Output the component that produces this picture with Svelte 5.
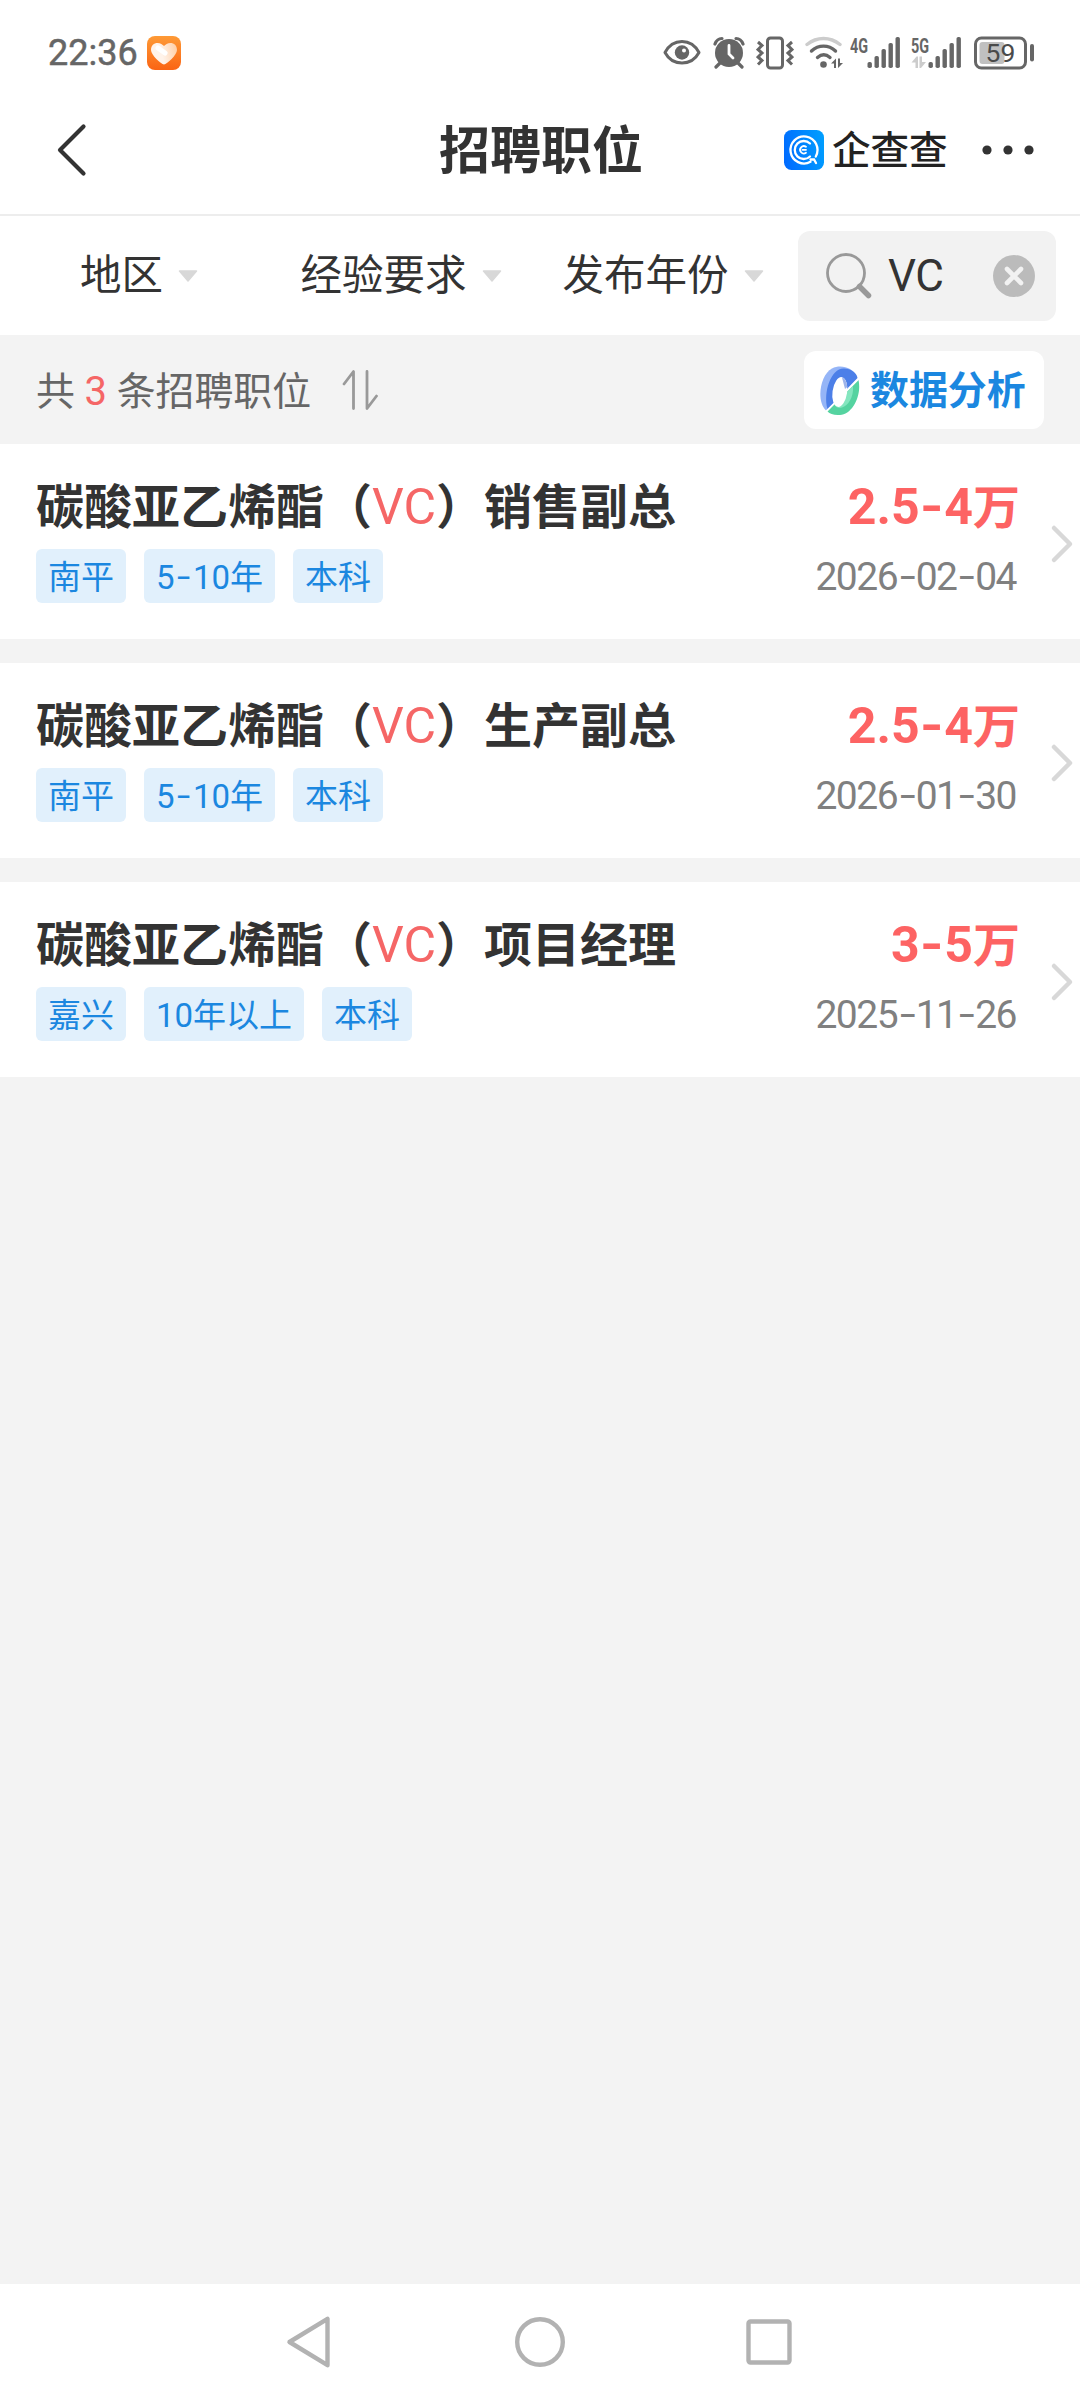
<script lang="ts">
	interface Job {
		id: number;
		name: string;
		keyword: string;
		role: string;
		tags: string[];
		salary: string;
		date: string;
	}

	const filters = ['地区', '经验要求', '发布年份'];
	const bars = [6, 12, 19, 25, 31];

	const jobs: Job[] = [
		{ id: 1, name: '碳酸亚乙烯酯', keyword: 'VC', role: '销售副总', tags: ['南平', '5-10年', '本科'], salary: '2.5-4', date: '2026-02-04' },
		{ id: 2, name: '碳酸亚乙烯酯', keyword: 'VC', role: '生产副总', tags: ['南平', '5-10年', '本科'], salary: '2.5-4', date: '2026-01-30' },
		{ id: 3, name: '碳酸亚乙烯酯', keyword: 'VC', role: '项目经理', tags: ['嘉兴', '10年以上', '本科'], salary: '3-5', date: '2025-11-26' }
	];

	let keyword = $state('VC');
</script>

{#snippet signal(label: string, data: boolean)}
	<div class="signal">
		<span class="network">{label}</span>
		<svg width="52" height="34" viewBox="0 0 52 34">
			{#each bars as h, i}
				<rect x={17.5 + i * 7} y={32 - h} width="4.4" height={h} rx="1.8" fill="#666" />
			{/each}
			{#if data}
				<path d="M0.500 26.500l5-6h1.500v11.500h-2.500v-5.500zM8.500 32V20.500H11V26h4l-5 6z" fill="#ccc" />
			{/if}
		</svg>
	</div>
{/snippet}

<!-- dash drawn wide and raised to sit level with the digits -->
{#snippet figures(text: string)}
	{#each text.split('-') as part, i}{#if i > 0}<span class="dash">-</span>{/if}{part}{/each}
{/snippet}

<div class="screen">
	<div class="status">
		<span class="time">22:36</span>
		<svg class="heart" width="34" height="34" viewBox="0 0 34 34">
			<defs>
				<linearGradient id="orange" x1="0" y1="0" x2="0" y2="1">
					<stop offset="0" stop-color="#fe9a36" />
					<stop offset="1" stop-color="#fa6414" />
				</linearGradient>
				<linearGradient id="cream" x1="0" y1="0.5" x2="1" y2="0.3">
					<stop offset="0.4" stop-color="#fff3ea" />
					<stop offset="1" stop-color="#ffd0a8" />
				</linearGradient>
			</defs>
			<rect width="34" height="34" rx="8" fill="url(#orange)" />
			<path d="M17 28.500C14 28 4 19 4 14c0-4.500 3-7 6.500-7 3 0 5 1.500 6.500 3 1.500-1.500 3.500-3 6.500-3 3.500 0 6.500 2.500 6.500 7 0 5-10 14-13 14.500z" fill="url(#cream)" />
			<path d="M11 12l7 5" stroke="#fff" stroke-width="5" stroke-linecap="round" />
		</svg>

		<div class="status-icons">
			<svg width="38" height="34" viewBox="0 0 38 34">
				<path d="M2 16.500C6 9 12 5.500 19 5.500s13 3.500 17 11c-4 7.500-10 10.500-17 10.500S6 24 2 16.500z" fill="none" stroke="#666" stroke-width="3" stroke-linejoin="round" />
				<circle cx="19" cy="16.500" r="7.200" fill="#666" />
				<circle cx="21" cy="14.500" r="2" fill="#fff" />
			</svg>
			<svg class="alarm" width="32" height="34" viewBox="0 0 32 34">
				<circle cx="16" cy="17" r="14" fill="#666" />
				<path d="M2 8c1.500-4 4-5.500 7-5.500M30 8c-1.500-4-4-5.500-7-5.500M7 27l-4 4M25 27l4 4" fill="none" stroke="#666" stroke-width="3.200" stroke-linecap="round" />
				<path d="M16 9.500v8.500l4 4" fill="none" stroke="#fff" stroke-width="2.800" stroke-linecap="round" />
			</svg>
			<svg class="vibrate" width="38" height="34" viewBox="0 0 38 34">
				<rect x="11.500" y="2" width="15" height="30" rx="3" fill="none" stroke="#666" stroke-width="3" />
				<path d="M2 6l4 3.500-4 4 4 3.500-4 4 4 3.500-4 4M36 6l-4 3.500 4 4-4 3.500 4 4-4 3.500 4 4" fill="none" stroke="#666" stroke-width="3" />
			</svg>
			<svg class="wifi" width="38" height="34" viewBox="0 0 38 34">
				<g fill="none" stroke-width="3.400" stroke-linecap="round">
					<path d="M2 8.500c10-8 23-8 33 0" stroke="#ccc" />
					<path d="M6.500 15c7-6.500 17-6.500 24 0M12.500 21.500c4-3.500 8.500-3.500 12.500 0" stroke="#666" />
				</g>
				<circle cx="18.500" cy="28.500" r="3.300" fill="#666" />
				<path d="M26 27.500l5-5v9.500h-2v-4.500zM33 32v-9.500h2v4.500h3z" fill="#666" />
			</svg>
			{@render signal('4G', false)}
			{@render signal('5G', true)}
			<svg class="battery" width="61" height="34" viewBox="0 0 61 34">
				<rect x="1.500" y="2" width="50" height="30" rx="6" fill="none" stroke="#666" stroke-width="3" />
				<rect x="5.500" y="6" width="25" height="22" rx="3" fill="#c0c0c0" />
				<rect x="56" y="8" width="4" height="17.500" rx="2" fill="#666" />
				<text x="26.500" y="26" font-size="26.500" text-anchor="middle" fill="#4a4a4a">59</text>
			</svg>
		</div>
	</div>

	<header class="header">
		<button class="back" aria-label="返回">
			<svg width="32" height="56" viewBox="0 0 32 56">
				<path d="M27.500 4.500L4 28l23.500 23.500" fill="none" stroke="#333" stroke-width="4.200" stroke-linecap="round" stroke-linejoin="round" />
			</svg>
		</button>
		<h1>招聘职位</h1>
		<div class="brand">
			<svg width="40" height="40" viewBox="0 0 40 40">
				<defs>
					<linearGradient id="blue" x1="0" y1="0.6" x2="1" y2="0.4">
						<stop offset="0" stop-color="#006cff" />
						<stop offset="1" stop-color="#009dff" />
					</linearGradient>
				</defs>
				<rect width="40" height="40" rx="7.500" fill="url(#blue)" />
				<g fill="none" stroke="#fff" stroke-linecap="round">
					<path d="M31.800 26.500A13.500 13.500 0 1 0 26.500 31.800M26.500 29.500h3.500l2 3.500" stroke-width="2.300" />
					<path d="M26 13.500A9 9 0 1 0 26 26.500" stroke-width="2.300" />
					<path d="M22 16.800A3.700 3.700 0 1 0 22 22.800M18.500 19.800h3.500" stroke-width="1.800" />
				</g>
			</svg>
			<span>企查查</span>
		</div>
		<button class="more" aria-label="更多">
			<svg width="52" height="12" viewBox="0 0 52 12">
				<circle cx="5" cy="6" r="4.600" fill="#333" />
				<circle cx="26" cy="6" r="4.600" fill="#333" />
				<circle cx="47" cy="6" r="4.600" fill="#333" />
			</svg>
		</button>
	</header>

	<div class="filters">
		{#each filters as filter}
			<button class="filter">
				{filter}
				<svg width="20" height="12" viewBox="0 0 20 12">
					<path d="M1.500 1h17L10 11z" fill="#d8d8d8" stroke="#d8d8d8" stroke-width="1.500" stroke-linejoin="round" />
				</svg>
			</button>
		{/each}
		<div class="search">
			<svg width="48" height="48" viewBox="0 0 48 48">
				<circle cx="21" cy="21" r="18.500" fill="none" stroke="#999" stroke-width="2.800" />
				<path d="M34.500 34.500l9 9" stroke="#999" stroke-width="5.500" stroke-linecap="round" />
			</svg>
			<span class="query">{keyword}</span>
			<button class="clear" aria-label="清除" onclick={() => (keyword = '')}>
				<svg width="42" height="42" viewBox="0 0 42 42">
					<circle cx="21" cy="21" r="21" fill="#bbb" />
					<path d="M14 14l14 14M28 14L14 28" stroke="#f2f2f2" stroke-width="4.600" stroke-linecap="round" />
				</svg>
			</button>
		</div>
	</div>

	<div class="summary">
		<span class="count">共 <em>{jobs.length}</em> 条招聘职位</span>
		<svg class="sort" width="36" height="42" viewBox="0 0 36 42">
			<path d="M2 15L11.500 2.500v37M25 2.500v37L34.500 27" fill="none" stroke="#999" stroke-width="2.800" stroke-linecap="round" stroke-linejoin="round" />
		</svg>
		<button class="analysis">
			<svg width="40" height="50" viewBox="0 0 40 50">
				<path d="M6 44.500C-4 35 0 9 12 2.500 21-2 33 2 36.500 10L14 36z" fill="#95b5f7" />
				<path d="M7.500 43C3 26 11 2 24 2.500c7 0 13 5 13.500 9.500L14 36.500z" fill="#4c7fe8" />
				<path d="M38.500 14C42 30 32 48.500 20 49 14 49.500 10 48 7.500 45.500z" fill="#55d3a0" />
				<path d="M33 20c1 11-5 20-11 21.500-3 1-5.500 0-7.500-2.500z" fill="#84e6bf" />
				<ellipse cx="19.800" cy="26" rx="7.300" ry="15" transform="rotate(8 19.800 26)" fill="#fff" />
				<path d="M22 11.500c3 .5 5 5 5.200 9.500l-2.200 2z" fill="#9eb4ea" />
				<path d="M6 45.500L39 12.500" stroke="#fff" stroke-width="1.500" />
			</svg>
			数据分析
		</button>
	</div>

	<main class="jobs">
		{#each jobs as job (job.id)}
			<article class="job">
				<div class="info">
					<h2>{job.name}（<em>{job.keyword}</em>）{job.role}</h2>
					<div class="tags">
						{#each job.tags as tag}
							<span class="tag">{@render figures(tag)}</span>
						{/each}
					</div>
				</div>
				<div class="side">
					<div class="salary">{@render figures(job.salary)}<span>万</span></div>
					<div class="date">{@render figures(job.date)}</div>
				</div>
				<svg class="chevron" width="24" height="40" viewBox="0 0 24 40">
					<path d="M4 4l16 16L4 36" fill="none" stroke="#d8d8d8" stroke-width="4.500" stroke-linecap="round" stroke-linejoin="round" />
				</svg>
			</article>
		{/each}
	</main>

	<nav class="navbar">
		<svg width="50" height="54" viewBox="0 0 50 54">
			<path d="M3.500 27L41.500 3.800v46.400z" fill="none" stroke="#b2b2b2" stroke-width="4.400" stroke-linejoin="round" />
		</svg>
		<svg width="50" height="54" viewBox="0 0 50 54">
			<circle cx="25" cy="27" r="22.800" fill="none" stroke="#b2b2b2" stroke-width="4.400" />
		</svg>
		<svg width="50" height="54" viewBox="0 0 50 54">
			<rect x="4.500" y="6.500" width="41" height="41" rx="2" fill="none" stroke="#b2b2b2" stroke-width="4.400" />
		</svg>
	</nav>
</div>

<style>
	:global(body) {
		background: #f3f3f3;
	}

	.screen {
		display: flex;
		flex-direction: column;
		width: 1080px;
		height: 2400px;
		background: #f3f3f3;
		color: #333;
		font-family: Roboto, 'Noto Sans CJK SC', sans-serif;
	}

	svg {
		display: block;
		flex-shrink: 0;
	}

	button {
		padding: 0;
		border: none;
		background: none;
		color: inherit;
		font: inherit;
	}

	em {
		color: #f56666;
		font-style: normal;
		font-weight: 400;
	}

	.status {
		display: flex;
		align-items: center;
		box-sizing: border-box;
		height: 86px;
		padding: 20px 45px 0 48px;
		background: #fff;
	}

	.time {
		color: #666;
		font-size: 36px;
		line-height: 66px;
		-webkit-text-stroke: 0.5px #666;
	}

	.heart {
		margin-left: 9px;
	}

	.status-icons {
		display: flex;
		align-items: center;
		margin-left: auto;
	}

	.alarm {
		margin-left: 12px;
	}

	.vibrate,
	.wifi {
		margin-left: 11px;
	}

	.signal {
		position: relative;
		margin-left: 7px;
	}

	.signal + .signal {
		margin-left: 9px;
	}

	.network {
		position: absolute;
		top: -2px;
		left: 0;
		color: #666;
		font-size: 20px;
		font-weight: 700;
		line-height: 24px;
		transform: scaleX(0.72);
		transform-origin: left;
	}

	.battery {
		margin-left: 11px;
	}

	.header {
		display: grid;
		grid-template-columns: 383px 202px 354px 1fr;
		align-items: center;
		height: 128px;
		padding: 0 44px 0 56px;
		border-bottom: 2px solid #ededed;
		background: #fff;
	}

	h1 {
		margin: 0;
		padding-top: 4px;
		font-size: 51px;
		font-weight: 600;
		line-height: 60px;
		white-space: nowrap;
	}

	.back {
		width: 32px;
	}

	.brand {
		display: flex;
		align-items: center;
		gap: 8px;
		margin-left: 143px;
		color: #222;
		font-size: 38.5px;
		font-weight: 500;
		line-height: 46px;
	}

	.brand span {
		padding-top: 2px;
		white-space: nowrap;
	}

	.more {
		margin-left: -13px;
	}

	.filters {
		display: flex;
		align-items: center;
		height: 119px;
		padding: 0 24px 0 8px;
		background: #fff;
	}

	.filter {
		display: flex;
		align-items: center;
		justify-content: center;
		gap: 15px;
		width: 262px;
		font-size: 41.5px;
		line-height: 60px;
	}

	.search {
		display: flex;
		align-items: center;
		flex: 1;
		box-sizing: border-box;
		height: 90px;
		margin-left: 4px;
		padding: 0 21px 0 27px;
		border-radius: 12px;
		background: #f2f2f2;
	}

	.query {
		margin-left: 15px;
		font-size: 44px;
		letter-spacing: -0.5px;
		line-height: 60px;
	}

	.clear {
		margin-left: auto;
	}

	.summary {
		display: flex;
		align-items: center;
		height: 109px;
		padding: 0 36px;
	}

	.count {
		padding-top: 4px;
		color: #666;
		font-size: 38.9px;
		line-height: 56px;
	}

	.count em {
		font-size: 40px;
	}

	.sort {
		margin-left: 31px;
	}

	.analysis {
		display: flex;
		align-items: center;
		gap: 10px;
		box-sizing: border-box;
		width: 240px;
		height: 78px;
		margin-left: auto;
		padding: 2px 0 0 16px;
		border-radius: 12px;
		background: #fff;
		color: #1b87e0;
		font-size: 38.9px;
		font-weight: 700;
		line-height: 56px;
		white-space: nowrap;
	}

	.jobs {
		display: flex;
		flex: 1;
		flex-direction: column;
		gap: 24px;
	}

	.job {
		display: flex;
		box-sizing: border-box;
		height: 195px;
		padding: 34px 6px 0 36px;
		background: #fff;
	}

	.info {
		flex: 1;
	}

	h2 {
		margin: 0;
		font-size: 48px;
		font-weight: 600;
		line-height: 60px;
		white-space: nowrap;
	}

	h2 em {
		font-size: 50px;
		line-height: 1;
	}

	.tags {
		display: flex;
		gap: 18px;
		margin-top: 11px;
	}

	.tag {
		padding: 4px 12px 0;
		border-radius: 6px;
		background: #e1f0fc;
		color: #1b87e0;
		font-size: 33px;
		line-height: 50px;
	}

	.dash {
		display: inline-block;
		margin: 0 0.14em;
		transform: scaleX(1.45) translateY(-1px);
	}

	.side {
		text-align: right;
		white-space: nowrap;
	}

	.salary {
		margin-top: -1px;
		color: #fd6363;
		font-size: 50px;
		font-weight: 700;
		line-height: 60px;
	}

	.salary .dash {
		margin: 0 0.05em;
		transform: scaleX(1.2);
	}

	.salary span:last-child {
		font-size: 47px;
	}

	.date {
		margin: 12px 4px 0 0;
		color: #808080;
		font-size: 39px;
		letter-spacing: -1.5px;
		line-height: 54px;
	}

	.date .dash {
		margin: 0 0.12em;
	}

	.chevron {
		margin: 46px 0 0 30px;
	}

	.navbar {
		display: flex;
		align-items: center;
		justify-content: center;
		gap: 179px;
		height: 116px;
		background: #fff;
	}
</style>
